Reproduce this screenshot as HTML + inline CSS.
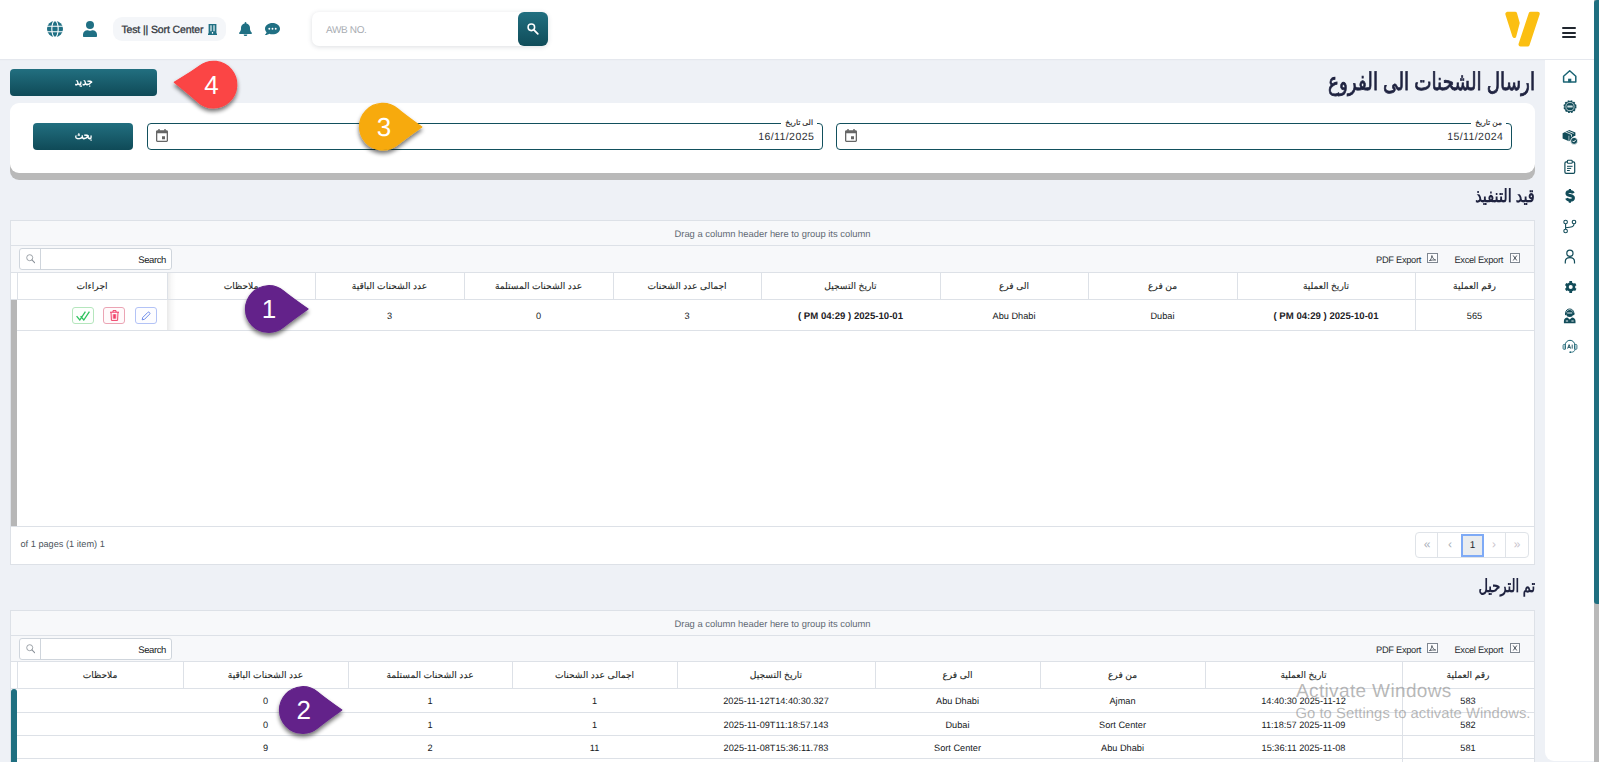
<!DOCTYPE html>
<html lang="ar">
<head>
<meta charset="utf-8">
<title>ارسال الشحنات الى الفروع</title>
<style>
*{box-sizing:border-box;margin:0;padding:0}
html,body{width:1599px;height:762px;overflow:hidden}
body{position:relative;background:#eef1f6;font-family:"Liberation Sans",sans-serif;color:#212529;font-size:10px;text-rendering:geometricPrecision}
.abs{position:absolute}
/* header */
#hdr{left:0;top:0;width:1594px;height:59px;background:#fff;box-shadow:0 1px 1px rgba(70,80,100,.05)}
#pill{left:113px;top:17px;width:113px;height:24px;border-radius:9px;background:#f4f6f9}
#pill span{position:absolute;left:8.400px;top:1px;line-height:24px;font-size:10.5px;color:#33383e;white-space:nowrap;letter-spacing:-.12px;-webkit-text-stroke:.3px #33383e}
#awb{left:312px;top:12px;width:236px;height:34px;border-radius:7px;background:#fff;box-shadow:0 1px 5px rgba(60,70,90,.18)}
#awb span{position:absolute;left:14px;top:1.500px;line-height:34px;font-size:10px;color:#a9adb3;letter-spacing:-.35px}
#awbbtn{right:0;top:0;width:30px;height:34px;border-radius:6px;background:linear-gradient(#216f80,#104c59)}
.tbtn{border-radius:4px;background:linear-gradient(#226f80,#0f4a57);color:#fff;text-align:center;font-weight:bold;font-size:11px}
.tbtn b{display:inline-block;transform:scaleX(.84)}
/* sidebar + scrollbar */
#side{left:1545px;top:60px;width:49px;height:701px;background:#fff;border-radius:0 0 0 9px}
#sbTrack{left:1594px;top:0;width:5px;height:762px;background:#b9b9b9}
#sbThumb{left:1594px;top:0;width:5px;height:604px;background:#1f6f80;border-radius:3px 0 0 3px}
/* title + card */
.h1{right:64px;top:65.800px;font-size:24.500px;transform:scaleX(.75);transform-origin:100% 50%;font-weight:normal;-webkit-text-stroke:.8px #1f2340;color:#1f2340;white-space:nowrap;direction:rtl;line-height:34px}
.h2{right:64px;font-size:18px;transform-origin:100% 50%;font-weight:bold;color:#1f2340;white-space:nowrap;direction:rtl;line-height:28px}
#card{left:10px;top:103px;width:1525px;height:70px;background:#fff;border-radius:9px;box-shadow:0 7px 0 #b9b9b9}
.dfield{top:20px;height:27px;border:1px solid #12505d;border-radius:4px}
.dfield .lbl{position:absolute;right:5px;top:-7px;height:12px;line-height:12px;padding:0 4px;background:#fff;font-size:7.500px;color:#222;direction:rtl;white-space:nowrap;-webkit-text-stroke:.15px #222}
.dfield .val{position:absolute;right:7.800px;top:.5px;line-height:25px;font-size:10.5px;color:#2b2f33;letter-spacing:.43px}
.dfield svg{position:absolute;left:8px;top:5px}

.grid{position:absolute;left:10px;width:1525px;background:#fff;border:1px solid #dde1e7;overflow:hidden}
.grid .hl{position:absolute;left:0;width:1523px;height:1px;background:#dde1e7}
.grid .vl{position:absolute;width:1px;background:#dde1e7}
.grid .band{position:absolute;left:0;width:1523px;background:#f7f8fa}
.gp{position:absolute;left:0;width:1523px;text-align:center;font-size:9.400px;color:#5f6973;white-space:nowrap}
.hc{position:absolute;text-align:center;font-size:9.100px;color:#1c1f23;-webkit-text-stroke:.1px #1c1f23;white-space:nowrap;direction:rtl}
.dc{position:absolute;padding-top:.8px;text-align:center;font-size:9.200px;color:#15181b;white-space:nowrap}
.dc.b{padding-top:1.700px;font-weight:bold;font-size:9.600px;color:#1d2125}
.sbox{position:absolute;left:8px;width:153px;height:22px;border:1px solid #cfd5dc;border-radius:3px;background:#fff}
.sbox i{position:absolute;left:20px;top:0;width:1px;height:20px;background:#cfd5dc}
.sbox span{position:absolute;right:5px;top:2px;line-height:20px;font-size:9.500px;color:#16191c;letter-spacing:-.4px}
.sbox svg{position:absolute;left:5.500px;top:5px;width:9.500px;height:9.500px}
.exp{position:absolute;margin-top:1.500px;letter-spacing:-.3px;font-size:9.300px;color:#2a2e33;white-space:nowrap;line-height:12px}
.ab{position:absolute;width:22px;height:17px;border-radius:3px;border:1px solid}
.pg{position:absolute;left:1404px;width:114px;height:26px;border:1px solid #dfe3e8;border-radius:4px;background:#fff}
.pg span{position:absolute;top:0;height:24px;line-height:23px;text-align:center;width:22px;font-size:12px;color:#a9afb8}
.pg i{position:absolute;top:0;width:1px;height:24px;background:#dfe3e8}
</style>
</head>
<body>
<!-- ===== header ===== -->
<div id="hdr" class="abs">
  <svg class="abs" style="left:47px;top:21px" width="16" height="16" viewBox="0 0 16 16"><circle cx="8" cy="8" r="8" fill="#207084"/><g fill="none" stroke="#fff" stroke-width="1.100"><ellipse cx="8" cy="8" rx="3.200" ry="8.300"/><path d="M0 5.300h16M0 10.700h16"/></g></svg>
  <svg class="abs" style="left:83px;top:21px" width="14" height="16" viewBox="0 0 14 16"><circle cx="7" cy="4" r="4" fill="#207084"/><path d="M1 16c-.6 0-1-.4-1-1v-1.400C0 11 2 9.200 4.400 9.200c.8 0 1.400.5 2.600.5s1.800-.5 2.600-.5c2.400 0 4.400 1.800 4.400 4.400V15c0 .6-.4 1-1 1z" fill="#207084"/></svg>
  <div id="pill" class="abs"><span>Test || Sort Center</span>
    <svg class="abs" style="left:95px;top:7px" width="9" height="11" viewBox="0 0 9 11"><path d="M.6 0h7.800v9.600H9V11H0V9.600h.6z" fill="#207084"/><path d="M2.300 1.300h1.400v6H2.300zM5.300 1.300h1.400v6H5.300z" fill="#cfe1e5"/><path d="M3.900 8h1.200v1.700H3.900z" fill="#fff"/></svg>
  </div>
  <svg class="abs" style="left:238.500px;top:22px" width="13" height="14" viewBox="0 0 13 14"><path d="M6.500 0c.5 0 .9.400.9.900v.5c2.100.4 3.600 2.200 3.600 4.400v.9c0 1.300.5 2.500 1.400 3.500l.2.200c.3.300.4.800.2 1.100-.2.400-.5.600-.9.600H1.100c-.4 0-.7-.2-.9-.6-.2-.3-.1-.8.2-1.100l.2-.2c.9-1 1.400-2.200 1.400-3.500v-.9c0-2.200 1.500-4 3.600-4.400V.9c0-.5.400-.9.900-.9zM8.300 12.600c0 .5-.2.900-.5 1.200-.4.400-.8.500-1.300.5s-.9-.1-1.300-.5c-.3-.3-.5-.7-.5-1.200z" fill="#207084"/></svg>
  <svg class="abs" style="left:265px;top:22.500px" width="15" height="13" viewBox="0 0 15 13"><path d="M7.500 0C3.400 0 0 2.500 0 5.700c0 1.300.6 2.500 1.600 3.500-.4 1.300-1.500 2.400-1.500 2.400-.1.100-.1.200-.1.300.1.100.2.100.3.100 1.800 0 3.200-.8 3.900-1.300 1 .4 2.100.6 3.300.6 4.100 0 7.500-2.500 7.500-5.600S11.600 0 7.500 0z" fill="#207084"/><circle cx="4.300" cy="5.700" r=".95" fill="#fff"/><circle cx="7.500" cy="5.700" r=".95" fill="#fff"/><circle cx="10.700" cy="5.700" r=".95" fill="#fff"/></svg>
  <div id="awb" class="abs"><span>AWB NO.</span>
    <div id="awbbtn" class="abs"><svg class="abs" style="left:9px;top:11.300px" width="11.800" height="11.800" viewBox="0 0 13 13"><circle cx="4.800" cy="4.800" r="3.600" fill="none" stroke="#fff" stroke-width="1.700"/><path d="M7.600 7.600l4.300 4.300" stroke="#fff" stroke-width="1.900" stroke-linecap="round"/></svg></div>
  </div>
  <!-- logo -->
  <svg class="abs" style="left:1504px;top:10px" width="38" height="38" viewBox="0 0 38 38"><g fill="#fbbf12" stroke="#fbbf12" stroke-width="4" stroke-linejoin="round"><path d="M3.300 3.800L11.100 3.800L13.700 13.100L10.300 26Z"/><path d="M26.700 3.700L33.800 3.700L23.600 34.500L16.500 34.500Z"/></g></svg>
  <!-- hamburger -->
  <div class="abs" style="left:1562px;top:27px;width:13.500px;height:2px;background:#20262e;border-radius:1px"></div>
  <div class="abs" style="left:1562px;top:31.500px;width:13.500px;height:2px;background:#20262e;border-radius:1px"></div>
  <div class="abs" style="left:1562px;top:36px;width:13.500px;height:2px;background:#20262e;border-radius:1px"></div>
</div>

<!-- ===== sidebar ===== -->
<div id="side" class="abs"></div>
<svg class="abs" style="left:1545px;top:60px" width="49" height="320" viewBox="1545 60 49 320" fill="none">
<!-- home -->
<path d="M1563.600 76.200L1569.700 70.800l6.100 5.400v5.800h-12.200z" stroke="#1b6474" stroke-width="1.500" stroke-linejoin="round"/><rect x="1568.100" y="78.700" width="3.200" height="3.600" fill="#1b6474"/>
<!-- badge -->
<circle cx="1570" cy="106.600" r="5.700" fill="#124c59" stroke="#124c59" stroke-width="1.600" stroke-dasharray="1.700 1.280"/><circle cx="1570" cy="106.600" r="4.100" stroke="#dfeaec" stroke-width=".8"/><rect x="1567.300" y="105.600" width="5.400" height="2" rx=".5" fill="#cfdfe2"/>
<!-- box check -->
<path d="M1562.600 133.300l6.600-3.200 6.200 2.300v3.300c-2.300.3-4 2.100-4.100 4.400l-2.300 1.200-6.400-2.700z" fill="#124c59"/><path d="M1565.200 131.900l6.300 2.600v2.200M1567.500 130.900l6.200 2.500" stroke="#fff" stroke-width=".8"/><path d="M1568.900 135.700v5.300" stroke="#fff" stroke-width=".6"/><circle cx="1574.100" cy="140.900" r="3.500" fill="#124c59" stroke="#fff" stroke-width=".8"/><path d="M1572.500 140.800l1.200 1.200 2.100-2.200" stroke="#fff" stroke-width="1"/>
<!-- clipboard -->
<rect x="1564.900" y="161.900" width="9.800" height="11.400" rx="1.300" stroke="#124c59" stroke-width="1.200"/><rect x="1567.400" y="160.300" width="4.800" height="2.900" rx=".8" fill="#fff" stroke="#124c59" stroke-width="1.100"/><path d="M1567 166.300h5.600M1567 168.400h4.200M1567 170.500h2.800" stroke="#124c59" stroke-width="1"/>
<!-- dollar -->
<path d="M1573.300 193.300c-.5-1.200-1.600-1.800-3.300-1.800-1.900 0-3.100.7-3.100 2 0 2.900 6.600 1.100 6.600 4.500 0 1.400-1.300 2.200-3.400 2.200-1.800 0-3-.6-3.500-1.900" stroke="#124c59" stroke-width="2.900"/><path d="M1569.900 188.900v2M1569.900 200.800v2" stroke="#124c59" stroke-width="2.200"/>
<!-- branch -->
<circle cx="1565.600" cy="222" r="1.800" stroke="#124c59" stroke-width="1.100"/><circle cx="1574" cy="222" r="1.800" stroke="#124c59" stroke-width="1.100"/><circle cx="1565.600" cy="231" r="1.800" stroke="#124c59" stroke-width="1.100"/><path d="M1565.600 223.900v5.200M1574 223.900c0 3-2.400 3.600-8.300 3.800" stroke="#124c59" stroke-width="1.100"/>
<!-- person -->
<circle cx="1569.900" cy="253.200" r="3.100" stroke="#124c59" stroke-width="1.200"/><path d="M1565.300 263.400v-1.800c0-2.500 2-4 4.600-4s4.600 1.500 4.600 4v1.800" stroke="#124c59" stroke-width="1.200"/>
<!-- gear -->
<g transform="translate(1570.700 287)"><circle r="3.300" stroke="#124c59" stroke-width="2.600"/><g stroke="#124c59" stroke-width="2.700"><path d="M0-5.900v2.400M0 5.900v-2.400M-5.100-2.950l2.100 1.200M5.100 2.950l-2.100-1.200M-5.100 2.950l2.100-1.200M5.100-2.950l-2.100 1.200"/></g></g>
<!-- agent -->
<circle cx="1569.700" cy="313.400" r="3.500" fill="#124c59"/><path d="M1565.700 313.700v-1c0-2.200 1.800-3.700 4-3.700s4 1.500 4 3.700v1" stroke="#124c59" stroke-width="1"/><rect x="1565" y="312.600" width="1.500" height="2.600" rx=".6" fill="#124c59"/><rect x="1572.900" y="312.600" width="1.500" height="2.600" rx=".6" fill="#124c59"/><path d="M1567.200 313h5" stroke="#fff" stroke-width=".9"/><path d="M1563.900 323.200v-2.300c0-2 1.700-3.200 3.500-3.400l2.300 2 2.300-2c1.800.2 3.500 1.400 3.500 3.400v2.300z" fill="#124c59"/><path d="M1565.800 321h2.300M1571.400 321h2.300" stroke="#fff" stroke-width=".9"/>
<!-- AI headset -->
<path d="M1565.200 349.400v-4.100c0-2.900 2.100-5 4.800-5s4.800 2.100 4.800 5v4.100" stroke="#1b6474" stroke-width="1"/><rect x="1563.100" y="344.400" width="2.300" height="5" rx="1.100" stroke="#1b6474" stroke-width=".9"/><rect x="1574.600" y="344.400" width="2.300" height="5" rx="1.100" stroke="#1b6474" stroke-width=".9"/><path d="M1574.800 349.400c0 2-1.500 2.800-3.600 2.800" stroke="#1b6474" stroke-width=".9"/><circle cx="1570.300" cy="352.200" r=".9" fill="#1b6474"/><path d="M1567.600 348.600l1.500-4 1.500 4M1568.100 347.400h2M1572.200 344.600v4" stroke="#124c59" stroke-width=".9"/>
</svg>
<div id="sbTrack" class="abs"></div>
<div id="sbThumb" class="abs"></div>

<!-- ===== title, new button, filter card ===== -->
<div class="abs tbtn" style="left:10px;top:69px;width:147px;height:27px;line-height:27.500px;direction:rtl"><b>جديد</b></div>
<div class="abs h1">ارسال الشحنات الى الفروع</div>
<div id="card" class="abs">
  <div class="abs tbtn" style="left:23px;top:20px;width:100px;height:27px;line-height:27.500px;direction:rtl"><b>بحث</b></div>
  <div class="abs dfield" style="left:137px;width:676px"><span class="lbl">الى تاريخ</span><span class="val">16/11/2025</span>
    <svg width="12" height="13" viewBox="0 0 12 13"><path d="M2.300 0h1.400v1.300h4.600V0h1.400v1.300h.9c.8 0 1.400.6 1.400 1.400v8.900c0 .8-.6 1.400-1.400 1.400H1.400C.6 13 0 12.400 0 11.600V2.700c0-.8.600-1.400 1.400-1.400h.9zM1.300 4.300v7.400h9.400V4.300zM6 7.300h3v3H6z" fill="#666"/></svg></div>
  <div class="abs dfield" style="left:826px;width:676px"><span class="lbl">من تاريخ</span><span class="val">15/11/2024</span>
    <svg width="12" height="13" viewBox="0 0 12 13"><path d="M2.300 0h1.400v1.300h4.600V0h1.400v1.300h.9c.8 0 1.400.6 1.400 1.400v8.900c0 .8-.6 1.400-1.400 1.400H1.400C.6 13 0 12.400 0 11.600V2.700c0-.8.600-1.400 1.400-1.400h.9zM1.300 4.300v7.400h9.400V4.300zM6 7.300h3v3H6z" fill="#666"/></svg></div>
</div>
<div class="abs h2" style="top:182.300px;transform:scaleX(.808)">قيد التنفيذ</div>
<div class="abs h2" style="top:572.300px;transform:scaleX(.726)">تم الترحيل</div>

<div class="grid" style="top:220px;height:345px"><div class="band" style="top:0;height:51px"></div><div class="hl" style="top:24px"></div><div class="hl" style="top:51px"></div><div class="hl" style="top:78px"></div><div class="gp" style="top:0px;line-height:25px">Drag a column header here to group its column</div><div class="sbox" style="top:27px"><svg width="11" height="11" viewBox="0 0 11 11"><circle cx="4.300" cy="4.300" r="3.500" fill="none" stroke="#8a9199" stroke-width=".95"/><path d="M6.900 6.900l3.300 3.300" stroke="#8a9199" stroke-width="1.200" stroke-linecap="round"/></svg><i></i><span>Search</span></div><svg class="abs" style="left:1498.500px;top:31.7px" width="10" height="10" viewBox="0 0 10 10"><rect x=".5" y=".5" width="9" height="9" fill="#fdfdfe" stroke="#7f8791" stroke-width="1"/><path d="M3.200 2.500l3.600 5M6.800 2.500l-3.600 5" stroke="#4a525b" stroke-width="1" fill="none"/></svg><div class="exp" style="left:1443.400px;top:31.5px">Excel Export</div><svg class="abs" style="left:1416px;top:31.7px" width="11" height="10" viewBox="0 0 11 10"><rect x=".5" y=".5" width="10" height="9" fill="#fdfdfe" stroke="#7f8791" stroke-width="1"/><path d="M2.400 7.600c1.300-.8 2.300-2.600 2.500-5.100.5 2.300 1.700 3.900 3.800 4.500-2.300-.2-4.400.1-6.300.6z" stroke="#4a525b" stroke-width=".9" fill="none"/></svg><div class="exp" style="left:1365px;top:31.5px">PDF Export</div><div class="vl" style="left:156px;top:52px;height:26px"></div><div class="vl" style="left:304px;top:52px;height:26px"></div><div class="vl" style="left:453px;top:52px;height:26px"></div><div class="vl" style="left:602px;top:52px;height:26px"></div><div class="vl" style="left:750px;top:52px;height:26px"></div><div class="vl" style="left:929px;top:52px;height:26px"></div><div class="vl" style="left:1077px;top:52px;height:26px"></div><div class="vl" style="left:1226px;top:52px;height:26px"></div><div class="vl" style="left:1404px;top:52px;height:26px"></div><div class="vl" style="left:6px;top:52px;height:26px"></div><div class="hc" style="left:6px;width:150px;top:52px;line-height:26px">اجراءات</div><div class="hc" style="left:156px;width:148px;top:52px;line-height:26px">ملاحظات</div><div class="hc" style="left:304px;width:149px;top:52px;line-height:26px">عدد الشحنات الباقية</div><div class="hc" style="left:453px;width:149px;top:52px;line-height:26px">عدد الشحنات المستلمة</div><div class="hc" style="left:602px;width:148px;top:52px;line-height:26px">اجمالى عدد الشحنات</div><div class="hc" style="left:750px;width:179px;top:52px;line-height:26px">تاريخ التسجيل</div><div class="hc" style="left:929px;width:148px;top:52px;line-height:26px">الى فرع</div><div class="hc" style="left:1077px;width:149px;top:52px;line-height:26px">من فرع</div><div class="hc" style="left:1226px;width:178px;top:52px;line-height:26px">تاريخ العملية</div><div class="hc" style="left:1404px;width:119px;top:52px;line-height:26px">رقم العملية</div><div class="dc" style="left:304px;width:149px;top:79px;line-height:30px">3</div><div class="dc" style="left:453px;width:149px;top:79px;line-height:30px">0</div><div class="dc" style="left:602px;width:148px;top:79px;line-height:30px">3</div><div class="dc b" style="left:750px;width:179px;top:79px;line-height:30px">( PM 04:29 ) 2025-10-01</div><div class="dc" style="left:929px;width:148px;top:79px;line-height:30px">Abu Dhabi</div><div class="dc" style="left:1077px;width:149px;top:79px;line-height:30px">Dubai</div><div class="dc b" style="left:1226px;width:178px;top:79px;line-height:30px">( PM 04:29 ) 2025-10-01</div><div class="dc" style="left:1404px;width:119px;top:79px;line-height:30px">565</div><div class="hl" style="top:109px"></div><div class="vl" style="left:1404px;top:79px;height:31px"></div><div class="abs" style="left:0;top:79px;width:6px;height:226px;background:#b7b7b7"></div><div class="abs" style="left:156px;top:79px;width:9px;height:30px;background:linear-gradient(90deg,rgba(0,0,0,.085),rgba(0,0,0,.03) 45%,rgba(0,0,0,0))"></div><div class="abs" style="left:157px;top:52px;width:8px;height:26px;background:linear-gradient(90deg,rgba(0,0,0,.07),rgba(0,0,0,.025) 45%,rgba(0,0,0,0))"></div><div class="ab" style="left:124px;top:86px;border-color:#b3c3f6;background:#fdfdff"><svg class="abs" style="left:5px;top:2.500px" width="10" height="10" viewBox="0 0 10 10"><path d="M1.200 8.800l.5-2.300L6.900 1.300c.4-.4 1-.4 1.400 0l.4.400c.4.400.4 1 0 1.400L3.500 8.300z" fill="none" stroke="#5e7fe6" stroke-width=".9" stroke-linejoin="round"/></svg></div><div class="ab" style="left:92px;top:86px;border-color:#eba4b4;background:#fffafb"><svg class="abs" style="left:5.500px;top:2px" width="9" height="11" viewBox="0 0 9 11"><path d="M0 2.200h9M3 2.200V.6h3v1.600M1 2.200l.4 8.200h6.200L8 2.200M3.300 4.200v4.500M4.500 4.200v4.500M5.700 4.200v4.500" fill="none" stroke="#f0355f" stroke-width=".95"/></svg></div><div class="ab" style="left:61px;top:86px;border-color:#b5e6bd;background:#fdfffd"><svg class="abs" style="left:3px;top:2.500px" width="14" height="10" viewBox="0 0 14 10"><path d="M.6 5.200L3.800 9l5.600-8.400M4.600 5.200L7.800 9l5.600-8.400" fill="none" stroke="#2ec25e" stroke-width="1.300"/></svg></div><div class="hl" style="top:305px"></div><div class="pg" style="top:311px"><span style="left:0">«</span><i style="left:21px"></i><span style="left:23px">‹</span><span style="left:67px;color:#c9c3cb">›</span><i style="left:88.500px"></i><span style="left:90px;color:#c9c3cb">»</span><b class="abs" style="left:45px;top:1px;width:23px;height:23px;border:2px solid #7eaaf6;background:#e9ecef;font-weight:normal;font-size:10px;color:#22262a;line-height:19px;text-align:center">1</b></div><div class="abs" style="left:9.500px;top:316.7px;font-size:9.200px;color:#4c545c;line-height:12px;white-space:nowrap">of 1 pages (1 item) 1</div></div>
<div class="grid" style="top:610px;height:200px"><div class="band" style="top:0;height:50px"></div><div class="hl" style="top:24px"></div><div class="hl" style="top:50px"></div><div class="hl" style="top:77px"></div><div class="gp" style="top:0px;line-height:25px">Drag a column header here to group its column</div><div class="sbox" style="top:27px"><svg width="11" height="11" viewBox="0 0 11 11"><circle cx="4.300" cy="4.300" r="3.500" fill="none" stroke="#8a9199" stroke-width=".95"/><path d="M6.900 6.900l3.300 3.300" stroke="#8a9199" stroke-width="1.200" stroke-linecap="round"/></svg><i></i><span>Search</span></div><svg class="abs" style="left:1498.500px;top:31.7px" width="10" height="10" viewBox="0 0 10 10"><rect x=".5" y=".5" width="9" height="9" fill="#fdfdfe" stroke="#7f8791" stroke-width="1"/><path d="M3.200 2.500l3.600 5M6.800 2.500l-3.600 5" stroke="#4a525b" stroke-width="1" fill="none"/></svg><div class="exp" style="left:1443.400px;top:31.5px">Excel Export</div><svg class="abs" style="left:1416px;top:31.7px" width="11" height="10" viewBox="0 0 11 10"><rect x=".5" y=".5" width="10" height="9" fill="#fdfdfe" stroke="#7f8791" stroke-width="1"/><path d="M2.400 7.600c1.300-.8 2.300-2.600 2.500-5.100.5 2.300 1.700 3.900 3.800 4.500-2.300-.2-4.400.1-6.300.6z" stroke="#4a525b" stroke-width=".9" fill="none"/></svg><div class="exp" style="left:1365px;top:31.5px">PDF Export</div><div class="vl" style="left:172px;top:51px;height:26px"></div><div class="vl" style="left:337px;top:51px;height:26px"></div><div class="vl" style="left:501px;top:51px;height:26px"></div><div class="vl" style="left:666px;top:51px;height:26px"></div><div class="vl" style="left:864px;top:51px;height:26px"></div><div class="vl" style="left:1029px;top:51px;height:26px"></div><div class="vl" style="left:1194px;top:51px;height:26px"></div><div class="vl" style="left:1391px;top:51px;height:26px"></div><div class="vl" style="left:6px;top:51px;height:26px"></div><div class="hc" style="left:6px;width:166px;top:51px;line-height:26px">ملاحظات</div><div class="hc" style="left:172px;width:165px;top:51px;line-height:26px">عدد الشحنات الباقية</div><div class="hc" style="left:337px;width:164px;top:51px;line-height:26px">عدد الشحنات المستلمة</div><div class="hc" style="left:501px;width:165px;top:51px;line-height:26px">اجمالى عدد الشحنات</div><div class="hc" style="left:666px;width:198px;top:51px;line-height:26px">تاريخ التسجيل</div><div class="hc" style="left:864px;width:165px;top:51px;line-height:26px">الى فرع</div><div class="hc" style="left:1029px;width:165px;top:51px;line-height:26px">من فرع</div><div class="hc" style="left:1194px;width:197px;top:51px;line-height:26px">تاريخ العملية</div><div class="hc" style="left:1391px;width:132px;top:51px;line-height:26px">رقم العملية</div><div class="dc" style="left:172px;width:165px;top:78px;line-height:23px">0</div><div class="dc" style="left:337px;width:164px;top:78px;line-height:23px">1</div><div class="dc" style="left:501px;width:165px;top:78px;line-height:23px">1</div><div class="dc" style="left:666px;width:198px;top:78px;line-height:23px">2025-11-12T14:40:30.327</div><div class="dc" style="left:864px;width:165px;top:78px;line-height:23px">Abu Dhabi</div><div class="dc" style="left:1029px;width:165px;top:78px;line-height:23px">Ajman</div><div class="dc" style="left:1194px;width:197px;top:78px;line-height:23px">14:40:30 2025-11-12</div><div class="dc" style="left:1391px;width:132px;top:78px;line-height:23px">583</div><div class="hl" style="top:101px"></div><div class="dc" style="left:172px;width:165px;top:102px;line-height:22px">0</div><div class="dc" style="left:337px;width:164px;top:102px;line-height:22px">1</div><div class="dc" style="left:501px;width:165px;top:102px;line-height:22px">1</div><div class="dc" style="left:666px;width:198px;top:102px;line-height:22px">2025-11-09T11:18:57.143</div><div class="dc" style="left:864px;width:165px;top:102px;line-height:22px">Dubai</div><div class="dc" style="left:1029px;width:165px;top:102px;line-height:22px">Sort Center</div><div class="dc" style="left:1194px;width:197px;top:102px;line-height:22px">11:18:57 2025-11-09</div><div class="dc" style="left:1391px;width:132px;top:102px;line-height:22px">582</div><div class="hl" style="top:124px"></div><div class="dc" style="left:172px;width:165px;top:125px;line-height:22px">9</div><div class="dc" style="left:337px;width:164px;top:125px;line-height:22px">2</div><div class="dc" style="left:501px;width:165px;top:125px;line-height:22px">11</div><div class="dc" style="left:666px;width:198px;top:125px;line-height:22px">2025-11-08T15:36:11.783</div><div class="dc" style="left:864px;width:165px;top:125px;line-height:22px">Sort Center</div><div class="dc" style="left:1029px;width:165px;top:125px;line-height:22px">Abu Dhabi</div><div class="dc" style="left:1194px;width:197px;top:125px;line-height:22px">15:36:11 2025-11-08</div><div class="dc" style="left:1391px;width:132px;top:125px;line-height:22px">581</div><div class="hl" style="top:147px"></div><div class="hl" style="top:171px"></div><div class="vl" style="left:1391px;top:78px;height:94px"></div><div class="abs" style="left:0;top:78px;width:6px;height:120px;background:#1f6f80;border-radius:3px 3px 0 0"></div></div>
<svg class="abs" style="left:164px;top:51px" width="86" height="72" viewBox="0 0 86 72"><defs><filter id="fm4" x="-30%" y="-30%" width="160%" height="170%"><feGaussianBlur in="SourceAlpha" stdDeviation="2.200"/><feOffset dx="-.5" dy="3"/><feComponentTransfer><feFuncA type="linear" slope=".55"/></feComponentTransfer><feMerge><feMergeNode/><feMergeNode in="SourceGraphic"/></feMerge></filter></defs><path d="M10.30 31.20 Q27.76 45.09 33.46 50.50 A23.30 23.30 0 1 0 35.64 14.87 Q29.32 19.54 10.30 31.20 Z" fill="#fb4444" stroke="#fb4444" stroke-width="1.200" stroke-linejoin="round" filter="url(#fm4)"/><text x="47.5" y="42.7" text-anchor="middle" font-family="Liberation Sans, sans-serif" font-size="26" fill="#fff">4</text></svg><svg class="abs" style="left:349px;top:93px" width="86" height="72" viewBox="0 0 86 72"><defs><filter id="fm3" x="-30%" y="-30%" width="160%" height="170%"><feGaussianBlur in="SourceAlpha" stdDeviation="2.200"/><feOffset dx="-.5" dy="3"/><feComponentTransfer><feFuncA type="linear" slope=".55"/></feComponentTransfer><feMerge><feMergeNode/><feMergeNode in="SourceGraphic"/></feMerge></filter></defs><path d="M72.80 33.90 Q56.23 22.17 48.87 15.93 A23.30 23.30 0 1 0 48.69 51.63 Q56.11 45.46 72.80 33.90 Z" fill="#f7aa0d" stroke="#f7aa0d" stroke-width="1.200" stroke-linejoin="round" filter="url(#fm3)"/><text x="35.0" y="42.9" text-anchor="middle" font-family="Liberation Sans, sans-serif" font-size="26" fill="#fff">3</text></svg><svg class="abs" style="left:235px;top:275px" width="87" height="72" viewBox="0 0 87 72"><defs><filter id="fm1" x="-30%" y="-30%" width="160%" height="170%"><feGaussianBlur in="SourceAlpha" stdDeviation="2.200"/><feOffset dx="-.5" dy="3"/><feComponentTransfer><feFuncA type="linear" slope=".55"/></feComponentTransfer><feMerge><feMergeNode/><feMergeNode in="SourceGraphic"/></feMerge></filter></defs><path d="M73.00 33.90 Q55.14 21.46 48.73 16.11 A23.30 23.30 0 1 0 48.82 51.81 Q55.20 46.43 73.00 33.90 Z" fill="#63238a" stroke="#63238a" stroke-width="1.200" stroke-linejoin="round" filter="url(#fm1)"/><text x="34.1" y="42.7" text-anchor="middle" font-family="Liberation Sans, sans-serif" font-size="26" fill="#fff">1</text></svg><svg class="abs" style="left:269px;top:676px" width="86" height="72" viewBox="0 0 86 72"><defs><filter id="fm2" x="-30%" y="-30%" width="160%" height="170%"><feGaussianBlur in="SourceAlpha" stdDeviation="2.200"/><feOffset dx="-.5" dy="3"/><feComponentTransfer><feFuncA type="linear" slope=".55"/></feComponentTransfer><feMerge><feMergeNode/><feMergeNode in="SourceGraphic"/></feMerge></filter></defs><path d="M72.80 33.90 Q56.15 22.30 48.73 16.11 A23.30 23.30 0 1 0 48.82 51.81 Q56.21 45.58 72.80 33.90 Z" fill="#63238a" stroke="#63238a" stroke-width="1.200" stroke-linejoin="round" filter="url(#fm2)"/><text x="34.7" y="42.7" text-anchor="middle" font-family="Liberation Sans, sans-serif" font-size="26" fill="#fff">2</text></svg>
<div class="abs" style="left:1296px;top:680.300px;font-size:19px;color:rgba(125,125,125,.55);white-space:nowrap;line-height:24px;letter-spacing:.36px">Activate Windows</div>
<div class="abs" style="left:1295.500px;top:704.300px;font-size:14.800px;color:rgba(125,125,125,.55);white-space:nowrap;line-height:20px;letter-spacing:.04px">Go to Settings to activate Windows.</div>
</body>
</html>
